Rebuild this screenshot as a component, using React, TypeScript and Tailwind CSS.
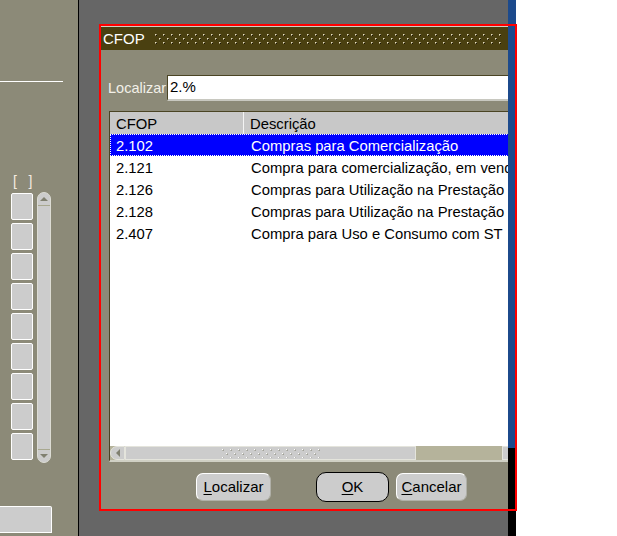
import React from "react";

const rows: [string, string][] = [
  ["2.102", "Compras para Comercialização"],
  ["2.121", "Compra para comercialização, em venda à ordem"],
  ["2.126", "Compras para Utilização na Prestação de Serviço"],
  ["2.128", "Compras para Utilização na Prestação de Serviço"],
  ["2.407", "Compra para Uso e Consumo com ST"],
];

function Dots({ id, w, h, light, mid, dark }: { id: string; w: number; h: number; light: string; mid: string; dark: string }) {
  return (
    <svg width={w} height={h} className="block shrink-0">
      <defs>
        <pattern id={id} width="8" height="8" patternUnits="userSpaceOnUse">
          <rect x="0" y="0" width="1" height="1" fill={light} />
          <rect x="1" y="0" width="1" height="1" fill={mid} />
          <rect x="0" y="1" width="1" height="1" fill={mid} />
          <rect x="1" y="1" width="1" height="1" fill={dark} />
          <rect x="4" y="4" width="1" height="1" fill={light} />
          <rect x="5" y="4" width="1" height="1" fill={mid} />
          <rect x="4" y="5" width="1" height="1" fill={mid} />
          <rect x="5" y="5" width="1" height="1" fill={dark} />
        </pattern>
      </defs>
      <rect x="0" y="0" width={w} height={h} fill={`url(#${id})`} />
    </svg>
  );
}

function Tri({ dir }: { dir: "up" | "down" | "left" }) {
  const pts = dir === "up" ? "0,4 8,4 4,0" : dir === "down" ? "0,0 8,0 4,4" : "4,0 4,8 0,4";
  const w = dir === "left" ? 4 : 8;
  const h = dir === "left" ? 8 : 4;
  return (
    <svg width={w} height={h} className="block">
      <polygon points={pts} fill="#808070" />
    </svg>
  );
}

function Btn({ label, u, w, def }: { label: string; u: string; w: string; def?: boolean }) {
  const rest = label.slice(1);
  if (def) {
    return (
      <div className={`flex h-[30px] ${w} items-center justify-center rounded-[10px] border border-black bg-[#cccccc] text-[15px] text-black`}>
        <span>
          <span className="underline underline-offset-2">{u}</span>
          {rest}
        </span>
      </div>
    );
  }
  return (
    <div className={`flex h-[28px] ${w} items-center justify-center rounded-[7px] border border-white border-b-[#b0b0a8] border-r-[#b0b0a8] bg-[#cccccc] text-[15px] text-black`}>
      <span>
        <span className="underline underline-offset-2">{u}</span>
        {rest}
      </span>
    </div>
  );
}

export default function App() {
  return (
    <div className="relative flex h-[536px] w-[617px] overflow-hidden bg-white font-['Liberation_Sans',Arial,sans-serif]">
      {/* left panel */}
      <div className="flex w-[78px] shrink-0 flex-col bg-[#8c8a78]">
        <div className="mt-[81px] h-px w-[63px] bg-white" />
        <div className="ml-[13px] mt-[91px] h-[16px] text-[14px] leading-[16px] text-[#f4ece0]">[&nbsp;&nbsp;&nbsp;]</div>
        <div className="mt-[3px] flex">
          <div className="ml-[11px] mt-px flex flex-col gap-[3px]">
            {Array.from({ length: 9 }).map((_, i) => (
              <div key={i} className="h-[27px] w-[22px] rounded-[2px] border border-white bg-[#cccccc]" />
            ))}
          </div>
          <div className="ml-[4px] flex h-[271px] w-[14px] flex-col overflow-hidden rounded-full border border-[#dcdcd4] bg-[#cccccc]">
            <div className="flex h-[13px] items-center justify-center border-b border-[#a8a890]">
              <Tri dir="up" />
            </div>
            <div className="flex-1" />
            <div className="flex h-[13px] items-center justify-center border-t border-[#a8a890]">
              <Tri dir="down" />
            </div>
          </div>
        </div>
        <div className="mt-[43px] h-[27px] w-[52px] rounded-tr-[2px] border-y border-r border-white bg-[#cccccc]" />
      </div>
      <div className="w-px shrink-0 bg-black" />

      {/* dark area with dialog */}
      <div className="w-[429px] shrink-0 overflow-hidden bg-[#666666] pl-[22px] pt-[26px]">
        <div className="flex h-[483px] w-[430px] flex-col bg-[#8c8a78]">
          <div className="h-px bg-[#cfcfc4]" />
          <div className="flex h-[23px] shrink-0 items-center bg-[#4a4010] pl-[2px]">
            <span className="text-[15px] leading-none text-white">CFOP</span>
            <div className="ml-[10px] mt-[1px]">
              <Dots id="tdots" w={348} h={11} light="#e8e0c0" mid="#9a9070" dark="#1a1400" />
            </div>
          </div>
          <div className="flex flex-1 flex-col pl-[7px]">
            {/* search row */}
            <div className="mt-[25px] flex h-[26px] items-center">
              <div className="w-[59px] shrink-0 pt-[2px] text-[14.5px] text-[#f2f0e8]">Localizar</div>
              <div className="flex h-[26px] flex-1 items-center border-l border-t border-b-2 border-[#4a4424] border-b-[#c8c8c0] bg-white pl-[2px] text-[15px] text-black">
                2.%
              </div>
            </div>
            {/* list */}
            <div className="ml-px mt-[10px] flex h-[351px] flex-col border-l border-t border-b-2 border-[#4a4424] border-b-[#d0d0c4] bg-white">
              <div className="flex h-[22px] shrink-0 items-center whitespace-nowrap bg-[#c8c8c8] text-[14.8px] text-black">
                <div className="flex h-full w-[134px] shrink-0 items-center border-r border-[#f4f4f4] pl-[6px] pt-[3px]">CFOP</div>
                <div className="pl-[6px] pt-[3px]">Descrição</div>
              </div>
              {rows.map(([code, desc], i) => (
                <div
                  key={code}
                  className={`flex h-[22px] shrink-0 items-center whitespace-nowrap pt-[2px] text-[14.8px] ${
                    i === 0 ? "border border-dotted border-white bg-[#0000ff] text-white" : "text-black"
                  }`}
                >
                  <div className={`shrink-0 ${i === 0 ? "w-[134px] pl-[5px]" : "w-[135px] pl-[6px]"}`}>{code}</div>
                  <div className="shrink-0 pl-[6px]">{desc}</div>
                </div>
              ))}
              <div className="flex-1" />
              {/* horizontal scrollbar */}
              <div className="flex h-[14px] shrink-0 bg-[#b5b39b]">
                <div className="flex w-[15px] shrink-0 items-center justify-center rounded-l-full border border-[#e4e4dc] bg-[#cccccc]">
                  <Tri dir="left" />
                </div>
                <div className="flex w-[291px] shrink-0 items-center border border-[#e4e4dc] bg-[#cccccc] pl-[96px]">
                  <Dots id="gdots" w={100} h={9} light="#ffffff" mid="#b8b8b0" dark="#a0a098" />
                </div>
                <div className="w-[86px] shrink-0" />
                <div className="flex w-[14px] shrink-0 items-center justify-center border border-[#e4e4dc] bg-[#cccccc]" />
              </div>
            </div>
            {/* buttons */}
            <div className="mt-[10px] flex h-[30px] items-center pl-[88px]">
              <Btn label="Localizar" u="L" w="w-[75px]" />
              <div className="ml-[45px]">
                <Btn label="OK" u="O" w="w-[73px]" def />
              </div>
              <div className="ml-[7px]">
                <Btn label="Cancelar" u="C" w="w-[71px]" />
              </div>
            </div>
          </div>
        </div>
      </div>

      {/* stripe */}
      <div className="flex w-[8px] shrink-0 flex-col">
        <div className="h-[448px] bg-[#1c4a8c]" />
        <div className="flex-1 bg-black" />
      </div>
      <div className="flex-1 bg-white" />

      {/* red highlight frame */}
      <div className="pointer-events-none absolute left-[99px] top-[24px] h-[487px] w-[418px] border-2 border-[#ff0000]" />
    </div>
  );
}
